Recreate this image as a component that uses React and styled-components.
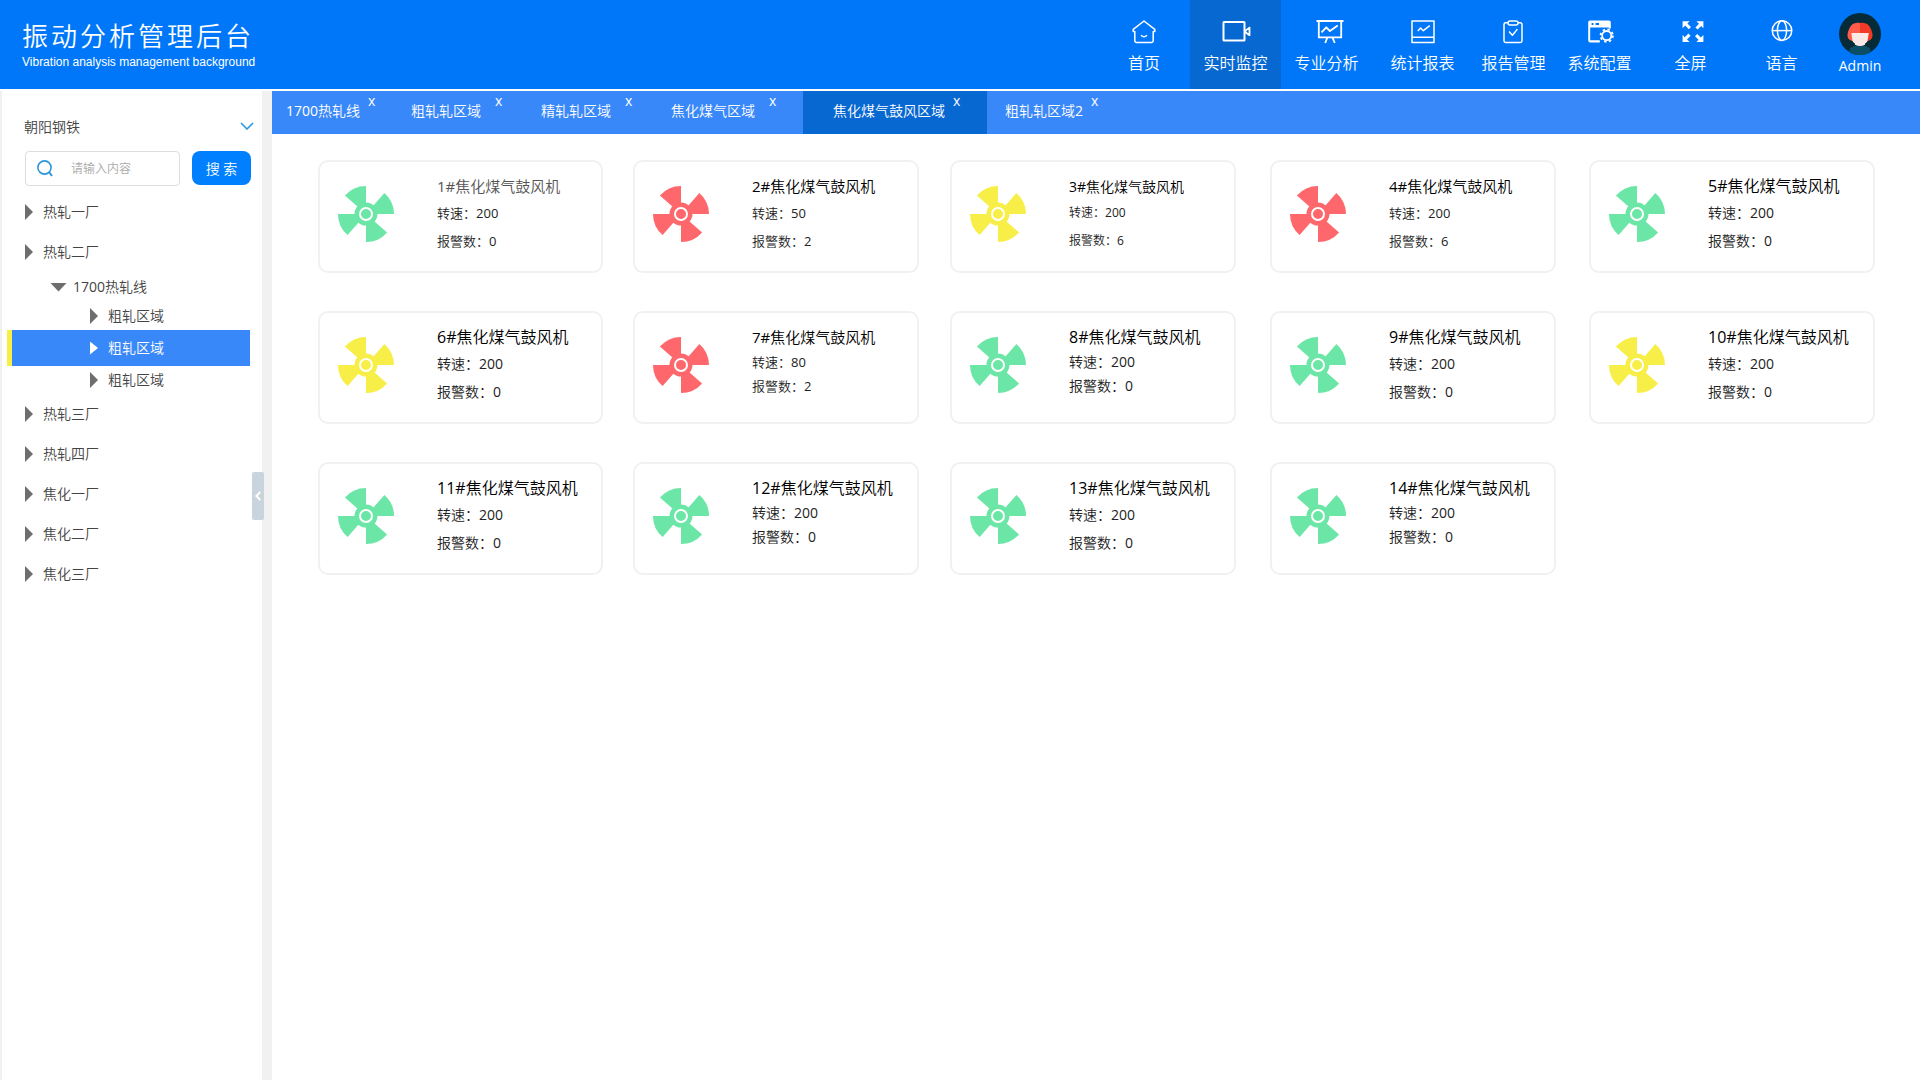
import { useState } from "react";
import styled, { createGlobalStyle } from "styled-components";

const colors = {
  header: "#0077f9",
  active: "#0768d2",
  tabs: "#3988f9",
  button: "#0080ff",
  accent: "#2b96dc",
  line: "#f1f1f1",
  text: "#444",
  arrow: "#6e6e6e",
  ok: "#6be6a6",
  warn: "#f7ee47",
  alarm: "#fe686d",
};

const fonts = '"Open Sans", "Noto Sans CJK SC DemiLight", "Noto Sans CJK SC", sans-serif';

const GlobalStyle = createGlobalStyle`
  * {
    box-sizing: border-box;
  }

  body {
    margin: 0;
    background: #fff;
    font-family: ${fonts};
  }

  button,
  input,
  select {
    font-family: inherit;
  }
`;

const navItems = [
  { label: "首页", icon: HomeIcon, width: 92 },
  { label: "实时监控", icon: VideoIcon, width: 91, active: true },
  { label: "专业分析", icon: BoardIcon, width: 91 },
  { label: "统计报表", icon: ChartIcon, width: 101 },
  { label: "报告管理", icon: ClipboardIcon, width: 81 },
  { label: "系统配置", icon: SettingsIcon, width: 91 },
  { label: "全屏", icon: FullscreenIcon, width: 91 },
  { label: "语言", icon: GlobeIcon, width: 91 },
];

const tabItems = [
  { label: "1700热轧线", width: 125, tight: true },
  { label: "粗轧轧区域", width: 130 },
  { label: "精轧轧区域", width: 130 },
  { label: "焦化煤气区域", width: 146 },
  { label: "焦化煤气鼓风区域", width: 184, tight: true, active: true },
  { label: "粗轧轧区域2", width: 130, tight: true },
];

const treeItems = [
  { label: "热轧一厂", level: 1 },
  { label: "热轧二厂", level: 1 },
  { label: "1700热轧线", level: 2, open: true },
  { label: "粗轧区域", level: 3 },
  { label: "粗轧区域", level: 3, active: true },
  { label: "粗轧区域", level: 3 },
  { label: "热轧三厂", level: 1 },
  { label: "热轧四厂", level: 1 },
  { label: "焦化一厂", level: 1 },
  { label: "焦化二厂", level: 1 },
  { label: "焦化三厂", level: 1 },
];

const fans = [
  { id: 1, speed: 200, alarms: 0, status: "ok", size: "md", muted: true },
  { id: 2, speed: 50, alarms: 2, status: "alarm", size: "md" },
  { id: 3, speed: 200, alarms: 6, status: "warn", size: "sm" },
  { id: 4, speed: 200, alarms: 6, status: "alarm", size: "md" },
  { id: 5, speed: 200, alarms: 0, status: "ok", size: "lg" },
  { id: 6, speed: 200, alarms: 0, status: "warn", size: "lg" },
  { id: 7, speed: 80, alarms: 2, status: "alarm", size: "md", compact: true },
  { id: 8, speed: 200, alarms: 0, status: "ok", size: "lg", compact: true },
  { id: 9, speed: 200, alarms: 0, status: "ok", size: "lg" },
  { id: 10, speed: 200, alarms: 0, status: "warn", size: "lg" },
  { id: 11, speed: 200, alarms: 0, status: "ok", size: "lg" },
  { id: 12, speed: 200, alarms: 0, status: "ok", size: "lg", compact: true },
  { id: 13, speed: 200, alarms: 0, status: "ok", size: "lg" },
  { id: 14, speed: 200, alarms: 0, status: "ok", size: "lg", compact: true },
];

const titleSizes = { sm: 14, md: 15, lg: 16 };
const lineSizes = { sm: 12, md: 13, lg: 14 };

export default function App() {
  return (
    <Page>
      <GlobalStyle />
      <Header />
      <Body>
        <Sidebar />
        <Content>
          <Tabs />
          <FanGrid>
            {fans.map((fan) => (
              <FanCard key={fan.id} {...fan} />
            ))}
          </FanGrid>
        </Content>
      </Body>
    </Page>
  );
}

function Header() {
  return (
    <HeaderBar>
      <Brand>
        <BrandTitle>振动分析管理后台</BrandTitle>
        <BrandSubtitle>Vibration analysis management background</BrandSubtitle>
      </Brand>
      <Nav>
        {navItems.map(({ label, icon: Icon, width, active }) => (
          <NavLink key={label} href="#" $width={width} $active={active}>
            <Icon />
            <span>{label}</span>
          </NavLink>
        ))}
        <UserLink href="#">
          <Avatar />
          <span>Admin</span>
        </UserLink>
      </Nav>
    </HeaderBar>
  );
}

function Sidebar() {
  const [query, setQuery] = useState("");

  return (
    <SidebarPanel>
      <CompanyField>
        <CompanySelect aria-label="公司" defaultValue="朝阳钢铁">
          <option>朝阳钢铁</option>
        </CompanySelect>
        <svg width="14" height="8" viewBox="0 0 14 8" fill="none" stroke={colors.accent} strokeWidth="1.6">
          <path d="M1 1l6 6 6-6" />
        </svg>
      </CompanyField>
      <SearchForm onSubmit={(e) => e.preventDefault()}>
        <SearchBox>
          <svg width="16" height="17" viewBox="0 0 16 17" fill="none" stroke={colors.accent} strokeWidth="1.6">
            <circle cx="7.5" cy="7.5" r="6.6" />
            <path d="M12 12l3 4" strokeWidth="2" />
          </svg>
          <SearchInput
            aria-label="搜索"
            placeholder="请输入内容"
            value={query}
            onChange={(e) => setQuery(e.target.value)}
          />
        </SearchBox>
        <SearchButton type="submit">搜 索</SearchButton>
      </SearchForm>
      <Tree>
        {treeItems.map((item, i) => (
          <TreeRow key={i} $level={item.level} $active={item.active}>
            <TreeButton type="button" $open={item.open}>
              <TreeArrow $open={item.open} $active={item.active} />
              {item.label}
            </TreeButton>
          </TreeRow>
        ))}
      </Tree>
      <CollapseButton type="button" aria-label="收起">
        <svg width="6" height="10" viewBox="0 0 6 10" fill="none" stroke="#fff" strokeWidth="2">
          <path d="M5.2 1L1.4 5l3.8 4" />
        </svg>
      </CollapseButton>
    </SidebarPanel>
  );
}

function Tabs() {
  return (
    <TabBar>
      {tabItems.map((tab) => (
        <Tab key={tab.label} $width={tab.width} $tight={tab.tight} $active={tab.active}>
          <TabLabel type="button">{tab.label}</TabLabel>
          <TabClose type="button" aria-label={`关闭 ${tab.label}`}>
            x
          </TabClose>
        </Tab>
      ))}
    </TabBar>
  );
}

function FanCard({ id, speed, alarms, status, size, compact, muted }) {
  return (
    <Card>
      <FanIcon color={colors[status]} />
      <CardText>
        <CardTitle $size={size} $muted={muted}>
          {id}#焦化煤气鼓风机
        </CardTitle>
        <CardLine $size={size} $compact={compact}>
          转速：{speed}
        </CardLine>
        <CardLine $size={size} $compact={compact}>
          报警数：{alarms}
        </CardLine>
      </CardText>
    </Card>
  );
}

function FanIcon({ color }) {
  return (
    <svg width="56" height="56" viewBox="0 0 56 56" fill={color}>
      {[0, 90, 180, 270].map((angle) => (
        <path key={angle} d="M28 28H56A28 28 0 0 0 46.4 6.9Z" transform={`rotate(${angle} 28 28)`} />
      ))}
      <circle cx="28" cy="28" r="11.5" />
      <circle cx="28" cy="28" r="6" stroke="#fff" strokeWidth="2" />
    </svg>
  );
}

function NavIcon({ children, strokeWidth = 1.5 }) {
  return (
    <svg
      width="34"
      height="24"
      viewBox="-3 0 34 24"
      fill="none"
      stroke="#fff"
      strokeWidth={strokeWidth}
      strokeLinejoin="round"
    >
      {children}
    </svg>
  );
}

function HomeIcon() {
  return (
    <NavIcon>
      <path d="M14 1L3.2 9.4v2h1.6v9.4a1.7 1.7 0 0 0 1.7 1.7h15a1.7 1.7 0 0 0 1.7-1.7v-9.4h1.6v-2z" />
      <path d="M11 15.2q3 3 6 0" />
    </NavIcon>
  );
}

function VideoIcon() {
  return (
    <NavIcon strokeWidth={2}>
      <rect x="1.5" y="2" width="21" height="18.4" rx="0.5" />
      <path d="M23.5 10.6l4-3v7.6l-4-3z" strokeWidth="1.8" />
    </NavIcon>
  );
}

function BoardIcon() {
  return (
    <NavIcon strokeWidth={1.8}>
      <path d="M3.5 1h27M5.8 1v16.4h22.4V1M14.4 17.4L12.2 23M19.4 17.4l2.4 5.6" />
      <path d="M8.5 12.3l4.8-5 3.6 3.7 7.8-5.6" />
    </NavIcon>
  );
}

function ChartIcon() {
  return (
    <NavIcon>
      <rect x="3" y="1" width="22" height="21.5" />
      <path d="M3 17.3h22M8.8 11l2.7-3 2.8 2.7 6.5-5" />
    </NavIcon>
  );
}

function ClipboardIcon() {
  return (
    <NavIcon>
      <path d="M8 2.8H5.6A1.6 1.6 0 0 0 4 4.4v16.4a1.6 1.6 0 0 0 1.6 1.6h14.8a1.6 1.6 0 0 0 1.6-1.6V4.4a1.6 1.6 0 0 0-1.6-1.6H18" />
      <rect x="8" y="1" width="10" height="4" rx="2" />
      <path d="M9 11.6l3.4 3.7 5-6.2" />
    </NavIcon>
  );
}

function SettingsIcon() {
  return (
    <NavIcon>
      <path
        d="M4 0.4h19a1.8 1.8 0 0 1 1.8 1.8v6.2h-2V7.6H4.2v12.6h9.6v2.2H4a1.8 1.8 0 0 1-1.8-1.8V2.2A1.8 1.8 0 0 1 4 0.4zM5.6 3v2h1.8V3zM9.6 3v2h3.4V3z"
        fill="#fff"
        fillRule="evenodd"
        stroke="none"
      />
      <circle cx="20.7" cy="15.6" r="4.6" strokeWidth="1.8" />
      <circle cx="20.7" cy="15.6" r="6.2" strokeWidth="1.8" strokeDasharray="2.4 2.47" />
    </NavIcon>
  );
}

function FullscreenIcon() {
  return (
    <NavIcon>
      {[0, 90, 180, 270].map((angle) => (
        <path
          key={angle}
          d="M5.6 1.2h7l-2.2 2.2 3.6 3.6-2.2 2.2-3.6-3.6-2.6 2.6z"
          fill="#fff"
          stroke="none"
          transform={`rotate(${angle} 16 11.6)`}
        />
      ))}
    </NavIcon>
  );
}

function GlobeIcon() {
  return (
    <NavIcon>
      <circle cx="14" cy="10.6" r="9.8" />
      <ellipse cx="14" cy="10.6" rx="4.6" ry="9.8" />
      <path d="M4.2 10.6h19.6" />
    </NavIcon>
  );
}

function Avatar() {
  return (
    <svg width="42" height="42" viewBox="0 0 42 42">
      <clipPath id="avatar-clip">
        <circle cx="21" cy="21" r="21" />
      </clipPath>
      <g clipPath="url(#avatar-clip)">
        <rect width="42" height="42" fill="#052a38" />
        <path d="M10.5 42v-4.5c0-3 4-5 10.5-5s10.5 2 10.5 5V42z" fill="#0b4f66" />
        <path d="M21 10c-3-.8-7 0-8.8 2.5C10.5 14.5 9 18 8.5 21c-.4 3.6 1 6 4.5 7h8z" fill="#fe5b4b" />
        <path d="M21 10c3-.8 7 0 8.8 2.5 1.7 2 3.2 5.5 3.7 8.5.4 3.6-1 6-4.5 7h-8z" fill="#f23a26" />
        <path
          d="M12.4 20h17.4l-1.2 7.6c-.3 1.4-1.4 2.4-2.6 3v1.2q-5 2.6-10 0v-1.2c-1.2-.6-2.3-1.6-2.6-3z"
          fill="#fbe9e8"
        />
      </g>
    </svg>
  );
}

const Page = styled.div`
  display: flex;
  flex-direction: column;
  min-height: 100vh;
`;

const HeaderBar = styled.header`
  display: flex;
  justify-content: space-between;
  height: 89px;
  margin-bottom: 2px;
  background: ${colors.header};
  color: #fff;
`;

const Brand = styled.div`
  padding: 19px 0 0 22px;
`;

const BrandTitle = styled.h1`
  margin: 0;
  font-size: 26px;
  font-weight: 400;
  line-height: 35px;
  letter-spacing: 3px;
  white-space: nowrap;
`;

const BrandSubtitle = styled.p`
  margin: 0;
  font-family: "Liberation Sans", sans-serif;
  font-size: 12px;
  line-height: 16px;
  white-space: nowrap;
`;

const Nav = styled.nav`
  display: flex;
  padding-right: 27px;
`;

const NavLink = styled.a`
  display: flex;
  flex-direction: column;
  align-items: center;
  gap: 7px;
  width: ${({ $width }) => $width}px;
  padding-top: 20px;
  background: ${({ $active }) => ($active ? colors.active : "transparent")};
  color: #fff;
  font-size: 16px;
  line-height: 24px;
  text-decoration: none;
  white-space: nowrap;
`;

const UserLink = styled.a`
  display: flex;
  flex-direction: column;
  align-items: center;
  width: 66px;
  padding-top: 13px;
  color: #fff;
  font-size: 14px;
  line-height: 22px;
  text-decoration: none;
`;

const Body = styled.div`
  display: flex;
  flex: 1;
`;

const SidebarPanel = styled.aside`
  position: relative;
  flex: none;
  width: 272px;
  padding-top: 23px;
  border-left: 2px solid ${colors.line};
  border-right: 10px solid ${colors.line};
  color: ${colors.text};
  font-size: 14px;
`;

const CompanyField = styled.div`
  display: grid;
  align-items: center;
  margin: 0 8px 0 22px;

  > * {
    grid-area: 1 / 1;
  }

  svg {
    justify-self: end;
    pointer-events: none;
  }
`;

const CompanySelect = styled.select`
  height: 24px;
  padding: 0;
  border: none;
  background: transparent;
  color: ${colors.text};
  font-size: 14px;
  appearance: none;
`;

const SearchForm = styled.form`
  display: flex;
  gap: 12px;
  margin: 13px 11px 6px 23px;
`;

const SearchBox = styled.div`
  display: flex;
  flex: 1;
  align-items: center;
  gap: 18px;
  min-width: 0;
  height: 35px;
  padding: 0 8px 0 11px;
  border: 1px solid #ddd;
  border-radius: 4px;

  svg {
    flex: none;
  }
`;

const SearchInput = styled.input`
  flex: 1;
  min-width: 0;
  padding: 0;
  border: none;
  outline: none;
  font-size: 12px;

  &::placeholder {
    color: #aaa;
  }
`;

const SearchButton = styled.button`
  width: 59px;
  height: 34px;
  padding: 0;
  border: none;
  border-radius: 8px;
  background: ${colors.button};
  color: #fff;
  font-size: 14px;
`;

const Tree = styled.ul`
  margin: 0;
  padding: 0;
  list-style: none;
`;

const rowHeights = { 1: 40, 2: 30, 3: 28 };
const rowIndents = { 1: 23, 2: 48, 3: 88 };

const TreeRow = styled.li`
  display: flex;
  align-items: center;
  height: ${({ $level, $active }) => ($active ? 36 : rowHeights[$level])}px;
  margin: 0 12px 0 5px;
  padding-left: ${({ $level, $active }) => rowIndents[$level] - ($active ? 10 : 5)}px;
  border-left: ${({ $active }) => ($active ? `5px solid ${colors.warn}` : "none")};
  background: ${({ $active }) => ($active ? colors.tabs : "transparent")};
  color: ${({ $active }) => ($active ? "#fff" : colors.text)};
`;

const TreeButton = styled.button`
  display: flex;
  align-items: center;
  gap: ${({ $open }) => ($open ? 6 : 10)}px;
  padding: 0;
  border: none;
  background: none;
  color: inherit;
  font-size: 14px;
  line-height: 20px;
`;

const TreeArrow = styled.span`
  width: ${({ $open }) => ($open ? 17 : 8)}px;
  height: ${({ $open, $active }) => ($open ? 9 : $active ? 13 : 16)}px;
  background: ${({ $active }) => ($active ? "#fff" : colors.arrow)};
  clip-path: ${({ $open }) =>
    $open ? "polygon(0 0, 100% 0, 50% 100%)" : "polygon(0 0, 100% 50%, 0 100%)"};
`;

const CollapseButton = styled.button`
  position: absolute;
  top: 381px;
  right: -2px;
  display: flex;
  align-items: center;
  justify-content: center;
  width: 12px;
  height: 48px;
  padding: 0;
  border: none;
  border-radius: 2px;
  background: #c8d5de;
`;

const Content = styled.main`
  flex: 1;
  min-width: 0;
`;

const TabBar = styled.div`
  display: flex;
  height: 43px;
  background: ${colors.tabs};
`;

const Tab = styled.div`
  display: flex;
  align-items: flex-start;
  gap: ${({ $tight }) => ($tight ? 8 : 14)}px;
  width: ${({ $width }) => $width}px;
  margin-right: ${({ $active }) => ($active ? 4 : 0)}px;
  padding-left: ${({ $active }) => ($active ? 30 : 14)}px;
  background: ${({ $active }) => ($active ? colors.active : "transparent")};
`;

const TabLabel = styled.button`
  padding: 10px 0 0;
  border: none;
  background: none;
  color: #fff;
  font-size: 14px;
  line-height: 20px;
  white-space: nowrap;
`;

const TabClose = styled.button`
  padding: 0;
  border: none;
  background: none;
  color: #fff;
  font-size: 14px;
  line-height: 20px;
`;

const FanGrid = styled.section`
  display: grid;
  grid-template-columns: 285fr 287fr 290fr 289fr 286fr;
  gap: 38px 30px;
  padding: 26px 45px 26px 46px;
`;

const Card = styled.article`
  display: flex;
  gap: 43px;
  max-width: 286px;
  height: 113px;
  padding: 24px 0 0 18px;
  border: 2px solid ${colors.line};
  border-radius: 10px;

  svg {
    flex: none;
  }
`;

const CardText = styled.div`
  margin-top: -12px;
  white-space: nowrap;
`;

const CardTitle = styled.h2`
  margin: 0;
  color: ${({ $muted }) => ($muted ? "#555" : "#000")};
  font-size: ${({ $size }) => titleSizes[$size]}px;
  font-weight: 400;
  line-height: 25px;
`;

const CardLine = styled.p`
  margin: 0;
  color: #222;
  font-size: ${({ $size }) => lineSizes[$size]}px;
  line-height: ${({ $compact }) => ($compact ? 24 : 28)}px;
`;
